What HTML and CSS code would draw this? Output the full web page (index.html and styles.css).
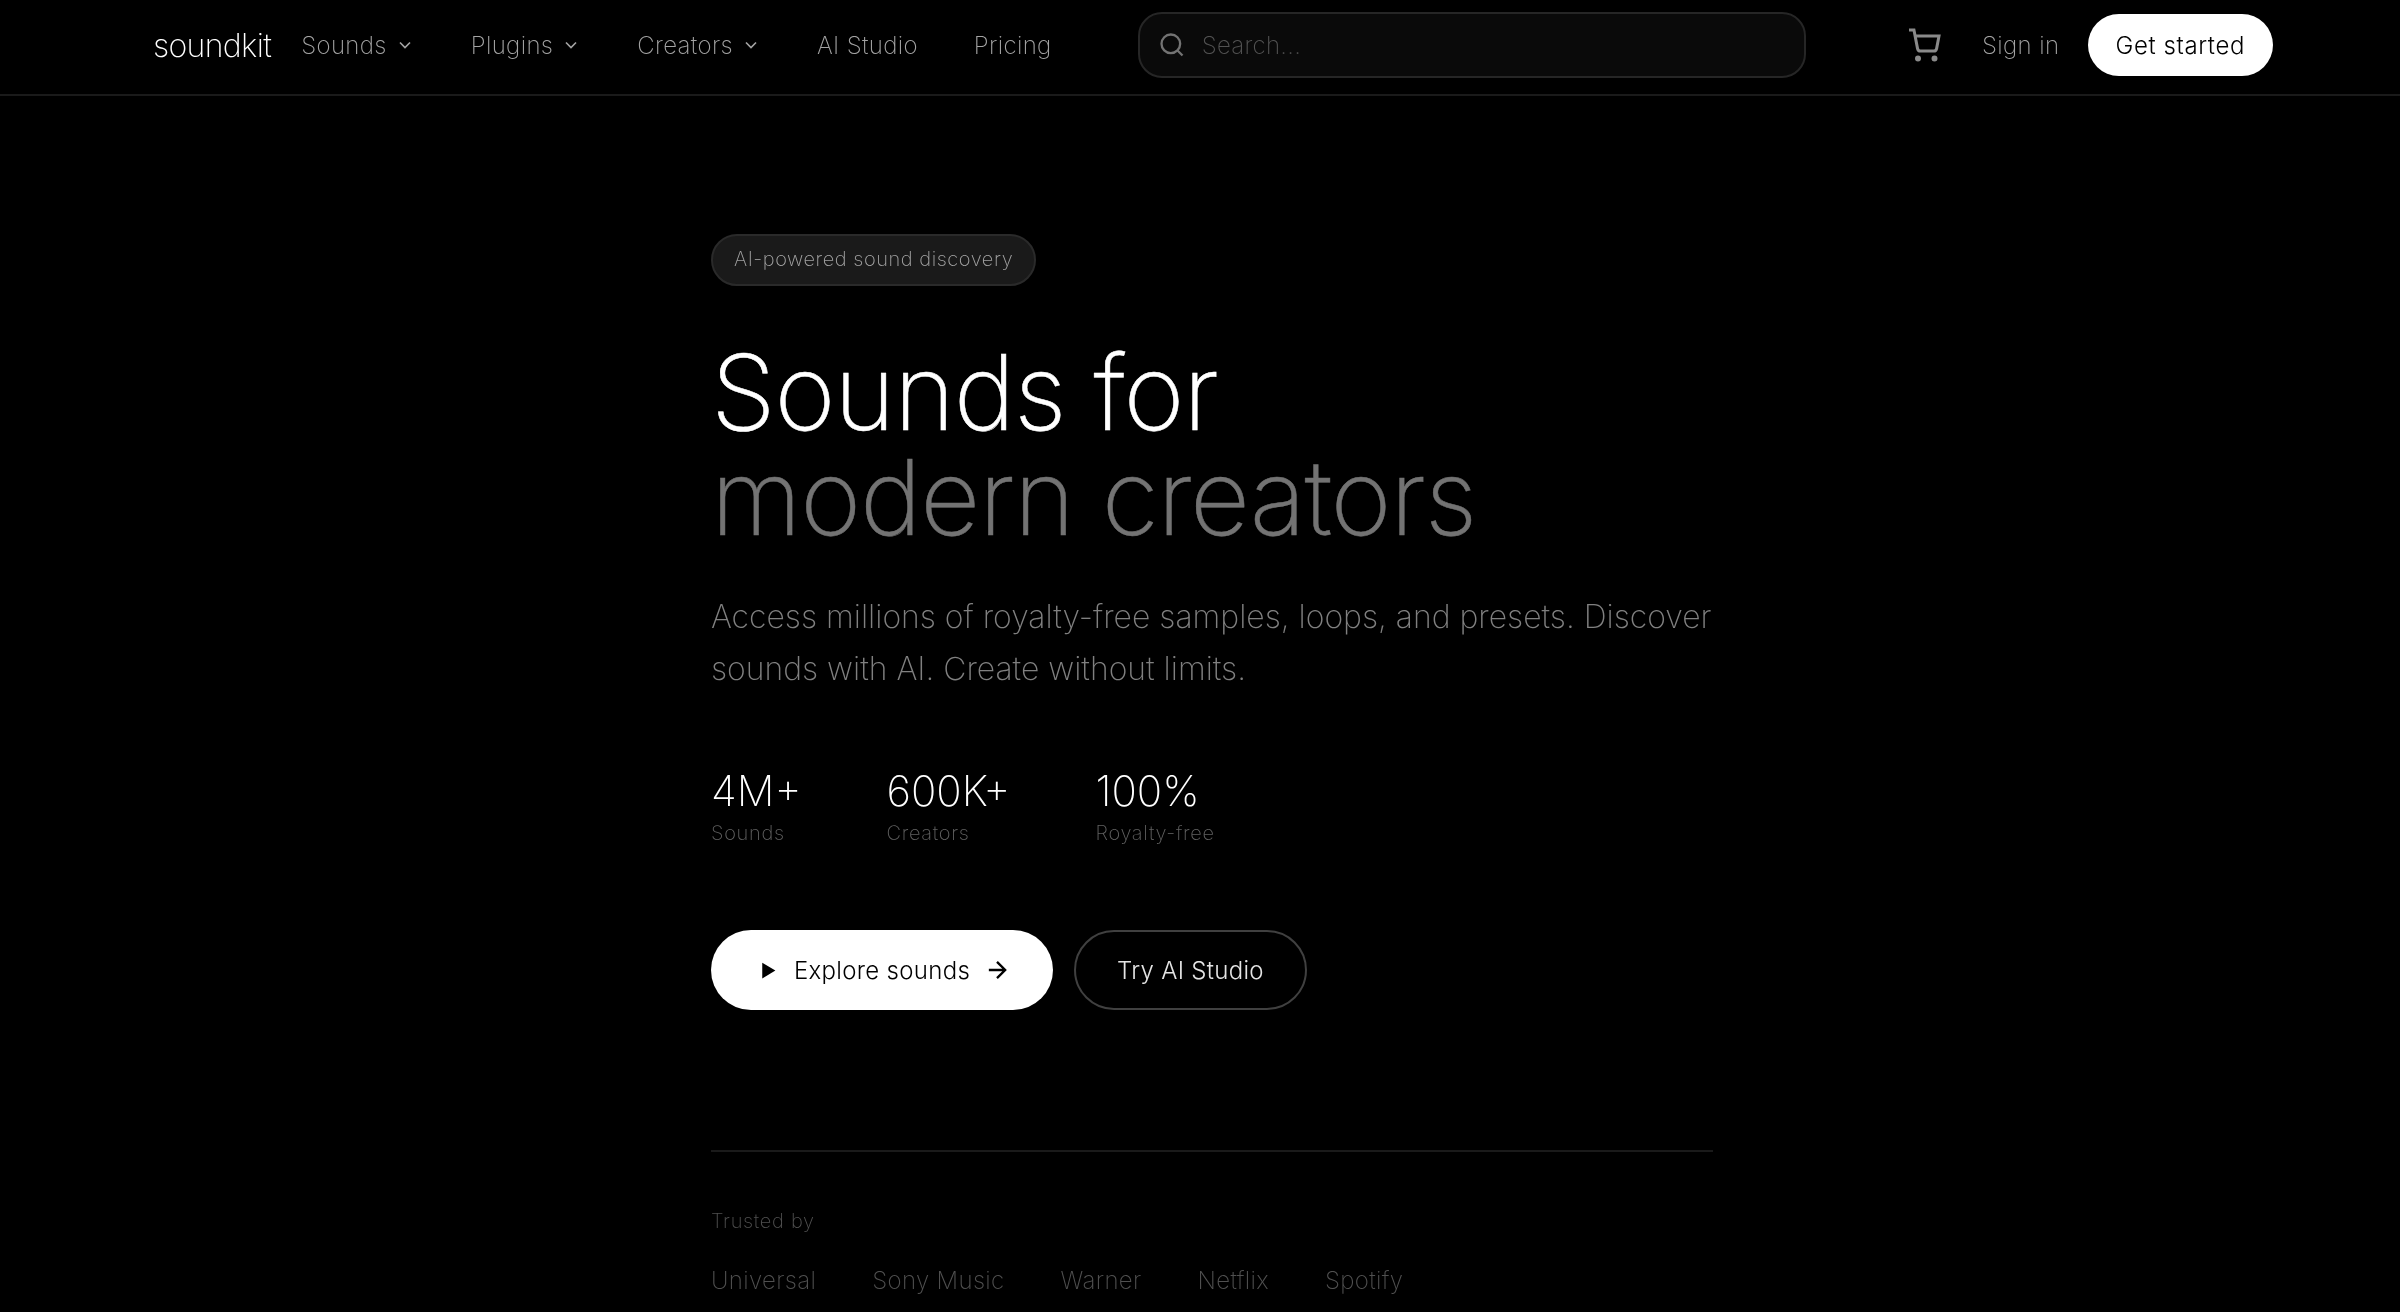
FILE: index.html
```html
<!DOCTYPE html>
<html>
<head>
    <meta charset="UTF-8">
    <meta name="viewport" content="width=device-width, initial-scale=1">
    <title>soundkit</title>
    <link rel="stylesheet" href="styles.css">
</head>
<body>

<header class="nav">
    <a class="logo">soundkit</a>
    <nav class="nav-links">
        <a class="nav-link">Sounds
            <svg class="chev" viewBox="0 0 24 24"><path d="M6 9l6 6 6-6"/></svg>
        </a>
        <a class="nav-link">Plugins
            <svg class="chev" viewBox="0 0 24 24"><path d="M6 9l6 6 6-6"/></svg>
        </a>
        <a class="nav-link">Creators
            <svg class="chev" viewBox="0 0 24 24"><path d="M6 9l6 6 6-6"/></svg>
        </a>
        <a class="nav-link">AI Studio</a>
        <a class="nav-link">Pricing</a>
    </nav>
    <div class="search">
        <svg class="search-icon" viewBox="0 0 24 24"><circle cx="11" cy="11" r="8"/><path d="M21 21l-4.3-4.3"/></svg>
        <span class="search-text">Search...</span>
    </div>
    <div class="nav-right">
        <svg class="cart" viewBox="0 0 24 24"><circle cx="8" cy="21" r="1"/><circle cx="19" cy="21" r="1"/><path d="M2 2h3.3l2.4 12.4a2 2 0 0 0 2 1.6h8.7a2 2 0 0 0 2-1.6L22 6H6"/></svg>
        <a class="sign-in">Sign in</a>
        <a class="get-started">Get started</a>
    </div>
</header>

<main class="hero">
    <span class="pill">AI-powered sound discovery</span>
    <h1 class="title">Sounds for <span class="title-dim">modern creators</span></h1>
    <p class="lead">Access millions of royalty-free samples, loops, and presets. Discover sounds with AI. Create without limits.</p>

    <div class="stats">
        <div>
            <div class="stat-num">4M+</div>
            <div class="stat-label">Sounds</div>
        </div>
        <div>
            <div class="stat-num">600K+</div>
            <div class="stat-label">Creators</div>
        </div>
        <div>
            <div class="stat-num">100%</div>
            <div class="stat-label">Royalty-free</div>
        </div>
    </div>

    <div class="actions">
        <a class="btn btn-white">
            <svg class="play" viewBox="0 0 24 24"><path d="M6 3l15 9-15 9z"/></svg>
            Explore sounds
            <svg class="arrow" viewBox="0 0 24 24"><path d="M5 12h14M12 5l7 7-7 7"/></svg>
        </a>
        <a class="btn btn-outline">Try AI Studio</a>
    </div>

    <section class="trusted">
        <div class="trusted-label">Trusted by</div>
        <div class="trusted-list">
            <span>Universal</span>
            <span>Sony Music</span>
            <span>Warner</span>
            <span>Netflix</span>
            <span>Spotify</span>
        </div>
    </section>
</main>

</body>
</html>
```

FILE: styles.css
```css
* {
    margin: 0;
    padding: 0;
    box-sizing: border-box;
}
html, body {
    height: 100%;
    overflow: hidden;
}
body {
    background: #000;
    color: #fff;
    font-family: "Inter", "Liberation Sans", sans-serif;
    font-weight: 200;
}
/* own layers, so the text gets grey antialiasing */
.nav, .hero {
    will-change: transform;
}
.nav {
    height: 96px;
    display: flex;
    align-items: center;
    padding: 0 127px 4px 153px;
    border-bottom: 2px solid #1a1a1a;
}
.logo {
    font-size: 32px;
    letter-spacing: -.65px;
    margin-right: 30px;
}
.nav-links {
    display: flex;
    gap: 56px;
    align-items: center;
}
.nav-link {
    display: flex;
    align-items: center;
    gap: 8px;
    font-size: 24px;
    letter-spacing: .35px;
    color: #a3a3a3;
}
.chev {
    width: 20px;
    height: 20px;
    fill: none;
    stroke: #a3a3a3;
    stroke-width: 2;
}
.search {
    width: 668px;
    height: 66px;
    margin-left: 86px;
    display: flex;
    align-items: center;
    gap: 16px;
    padding-left: 18px;
    background: #0a0a0a;
    border: 2px solid #262626;
    border-radius: 24px;
}
.search-icon {
    width: 28px;
    height: 28px;
    fill: none;
    stroke: #737373;
    stroke-width: 2;
}
.search-text {
    font-size: 24px;
    letter-spacing: .3px;
    color: #525252;
}
.nav-right {
    margin-left: auto;
    display: flex;
    align-items: center;
}
.cart {
    width: 36px;
    height: 36px;
    fill: none;
    stroke: #8a8a8a;
    stroke-width: 2;
    margin-right: 40px;
}
.sign-in {
    font-size: 24px;
    letter-spacing: .4px;
    color: #a3a3a3;
    margin-right: 28px;
}
.get-started {
    height: 62px;
    padding: 0 28px;
    display: flex;
    align-items: center;
    border-radius: 31px;
    background: #fff;
    color: #000;
    font-size: 24px;
    font-weight: 300;
    letter-spacing: .6px;
}
.hero {
    width: 1002px;
    margin-left: 711px;
    padding-top: 138px;
}
.pill {
    display: inline-block;
    padding: 0 21px;
    height: 52px;
    line-height: 46px;
    border: 2px solid #2a2a2a;
    border-radius: 26px;
    background: #1a1a1a;
    color: #a3a3a3;
    font-size: 20px;
    letter-spacing: .55px;
}
.title {
    margin-top: 54px;
    font-size: 104px;
    font-weight: 200;
    line-height: 105px;
    letter-spacing: -1.2px;
    -webkit-text-stroke: .5px;
}
.title-dim {
    display: block;
    color: #737373;
}
.lead {
    margin-top: 41px;
    font-size: 31.9px;
    line-height: 52px;
    color: #808080;
}
.stats {
    margin-top: 68px;
    display: flex;
    gap: 85px;
}
.stat-num {
    font-size: 42px;
    line-height: 56px;
}
.stat-label {
    font-size: 20px;
    line-height: 28px;
    letter-spacing: .7px;
    color: #606060;
}
.actions {
    margin-top: 83px;
    display: flex;
    gap: 21px;
}
.btn {
    height: 80px;
    display: flex;
    align-items: center;
    font-size: 24px;
    font-weight: 300;
    letter-spacing: .3px;
    border-radius: 40px;
}
.btn-white {
    width: 342px;
    padding-left: 46px;
    gap: 16px;
    background: #fff;
    color: #000;
}
.btn-outline {
    padding: 0 41px;
    color: #e5e5e5;
    border: 2px solid #404040;
}
.play {
    width: 21px;
    height: 21px;
    fill: #000;
}
.arrow {
    width: 28px;
    height: 28px;
    margin-left: -3px;
    fill: none;
    stroke: #000;
    stroke-width: 2;
}
.trusted {
    margin-top: 140px;
    padding-top: 55px;
    border-top: 2px solid #1a1a1a;
}
.trusted-label {
    font-size: 20px;
    line-height: 28px;
    letter-spacing: .7px;
    color: #505050;
}
.trusted-list {
    margin-top: 31px;
    display: flex;
    gap: 56px;
    font-size: 24px;
    letter-spacing: .35px;
    color: #505050;
}
```
